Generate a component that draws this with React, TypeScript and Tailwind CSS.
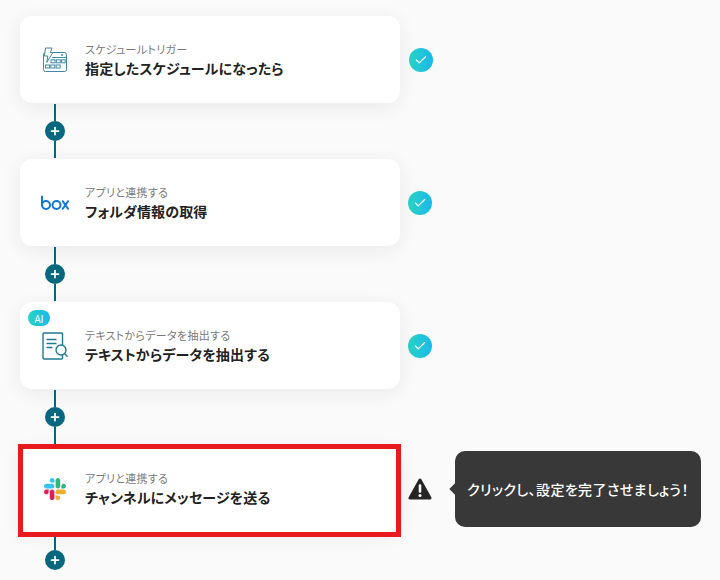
import { Plus, Check } from 'lucide-react'
import type { ReactNode } from 'react'

const jp = "font-['Noto_Sans_CJK_JP','Noto_Sans',sans-serif] [font-feature-settings:'palt']"

function ScheduleIcon() {
  return (
    <svg width="26" height="26" viewBox="0 0 26 26" fill="none" stroke="#3f8aa1" strokeWidth="1">
      <rect x="1.5" y="5.5" width="23" height="19" rx="2" />
      <path d="M10 10.5h14.5" />
      <circle cx="20" cy="8" r="0.6" fill="#3f8aa1" />
      <path d="M3.5 1h6.5L8.4 5.5h2.4L4.8 15.5l1-6.5H2.4z" fill="#fff" strokeLinejoin="round" />
      <rect x="9" y="12.8" width="4" height="3" />
      <rect x="14.3" y="12.8" width="4" height="3" />
      <rect x="19.6" y="12.8" width="3.6" height="3" />
      <rect x="3.5" y="18" width="4" height="3" />
      <rect x="8.8" y="18" width="4" height="3" />
      <rect x="14.1" y="18" width="4" height="3" />
    </svg>
  )
}

function BoxLogo() {
  return (
    <svg width="30" height="16" viewBox="0 0 30 16" fill="none" stroke="#0f74dc" strokeWidth="2" strokeLinecap="round">
      <path d="M2 1.5v8.5" />
      <circle cx="6" cy="10" r="4" />
      <circle cx="16.5" cy="10" r="4" />
      <path d="M22.8 6.2l5.2 7.6M28 6.2l-5.2 7.6" />
    </svg>
  )
}

function ExtractIcon() {
  return (
    <svg width="26" height="28" viewBox="0 0 26 28" fill="none" stroke="#1f7a94" strokeWidth="1.4">
      <rect x="1" y="1" width="19.5" height="26" rx="1" />
      <path d="M4.5 7.5h10M4.5 11.5h10M4.5 15.5h6" />
      <circle cx="19" cy="18" r="5" fill="#fff" />
      <path d="M22.8 21.8l2.7 2.9" />
    </svg>
  )
}

function SlackLogo() {
  return (
    <svg width="22" height="22" viewBox="0 0 122.8 122.8">
      <path fill="#E01E5A" d="M25.8 77.6c0 7.1-5.8 12.9-12.9 12.9S0 84.7 0 77.6s5.8-12.9 12.9-12.9h12.9v12.9z" />
      <path fill="#E01E5A" d="M32.3 77.6c0-7.1 5.8-12.9 12.9-12.9s12.9 5.8 12.9 12.9v32.3c0 7.1-5.8 12.9-12.9 12.9s-12.9-5.8-12.9-12.9V77.6z" />
      <path fill="#36C5F0" d="M45.2 25.8c-7.1 0-12.9-5.8-12.9-12.9S38.1 0 45.2 0s12.9 5.8 12.9 12.9v12.9H45.2z" />
      <path fill="#36C5F0" d="M45.2 32.3c7.1 0 12.9 5.8 12.9 12.9s-5.8 12.9-12.9 12.9H12.9C5.8 58.1 0 52.3 0 45.2s5.8-12.9 12.9-12.9h32.3z" />
      <path fill="#2EB67D" d="M97 45.2c0-7.1 5.8-12.9 12.9-12.9s12.9 5.8 12.9 12.9-5.8 12.9-12.9 12.9H97V45.2z" />
      <path fill="#2EB67D" d="M90.5 45.2c0 7.1-5.8 12.9-12.9 12.9s-12.9-5.8-12.9-12.9V12.9C64.7 5.8 70.5 0 77.6 0s12.9 5.8 12.9 12.9v32.3z" />
      <path fill="#ECB22E" d="M77.6 97c7.1 0 12.9 5.8 12.9 12.9s-5.8 12.9-12.9 12.9-12.9-5.8-12.9-12.9V97h12.9z" />
      <path fill="#ECB22E" d="M77.6 90.5c-7.1 0-12.9-5.8-12.9-12.9s5.8-12.9 12.9-12.9h32.3c7.1 0 12.9 5.8 12.9 12.9s-5.8 12.9-12.9 12.9H77.6z" />
    </svg>
  )
}

function Done({ className = '' }: { className?: string }) {
  return (
    <span className={`flex h-6 w-6 items-center justify-center rounded-full bg-gradient-to-r from-[#2bd4c4] to-[#1bb8ea] ${className}`}>
      <Check size={14} strokeWidth={2} className="text-white" />
    </span>
  )
}

function Warning() {
  return (
    <svg width="24" height="22" viewBox="0 0 24 22">
      <path fill="#262626" stroke="#262626" strokeWidth="3" strokeLinejoin="round" d="M12 2L2 20h20z" />
      <path stroke="#fff" strokeWidth="2.6" strokeLinecap="round" d="M12 7.5v6" />
      <circle cx="12" cy="17.5" r="1.5" fill="#fff" />
    </svg>
  )
}

function Card({ icon, label, title, children }: { icon: ReactNode; label: string; title: string; children?: ReactNode }) {
  return (
    <div className="relative flex h-[87px] w-[380px] shrink-0 items-center gap-[15px] rounded-xl bg-white pl-5 shadow-[0_4px_20px_rgba(0,0,0,0.07)]">
      <div className="flex w-[30px] items-center justify-center">{icon}</div>
      <div className="flex flex-col">
        <span className="text-[11px] leading-[18px] tracking-[0.3px] text-[#7a7a7a]">{label}</span>
        <span className="-mt-px text-sm leading-[22px] font-bold tracking-[0.15px] text-[#222]">{title}</span>
      </div>
      {children}
    </div>
  )
}

function Connector({ last = false }: { last?: boolean }) {
  return (
    <div className="ml-[25px] flex h-14 w-5 flex-col items-center py-px">
      <span className="w-0.5 flex-1 bg-[#06677f]" />
      <span className="flex h-5 w-5 items-center justify-center rounded-full bg-[#06677f]">
        <Plus size={12} strokeWidth={3.5} className="text-white" />
      </span>
      {last ? <span className="flex-1" /> : <span className="w-0.5 flex-1 bg-[#06677f]" />}
    </div>
  )
}

export default function App() {
  return (
    <div className={`h-[580px] overflow-hidden bg-[#fafafa] pt-4 pl-5 ${jp}`}>
      <div className="flex items-center gap-2">
        <Card icon={<ScheduleIcon />} label="スケジュールトリガー" title="指定したスケジュールになったら" />
        <Done className="ml-px" />
      </div>
      <Connector />
      <div className="flex items-center gap-2">
        <Card icon={<BoxLogo />} label="アプリと連携する" title="フォルダ情報の取得" />
        <Done />
      </div>
      <Connector />
      <div className="flex items-center gap-2">
        <Card icon={<ExtractIcon />} label="テキストからデータを抽出する" title="テキストからデータを抽出する">
          <span className="absolute top-2 left-2 flex h-4 w-[22px] items-center justify-center rounded-full bg-gradient-to-r from-[#2bd4c4] to-[#1bb8ea] text-[10px] text-white">
            AI
          </span>
        </Card>
        <Done />
      </div>
      <Connector />
      <div className="flex items-center gap-2">
        <Card icon={<SlackLogo />} label="アプリと連携する" title="チャンネルにメッセージを送る">
          <span className="absolute -top-px -right-px -bottom-[5px] -left-0.5 border-[5px] border-[#e8191f]" />
        </Card>
        <Warning />
        <div className="relative ml-[15px] flex h-[76px] w-[246px] items-center justify-center rounded-[10px] bg-[#383838] text-sm font-medium tracking-[0.4px] text-white">
          <span className="absolute top-[34px] -left-1 h-2 w-2 rotate-45 bg-[#383838]" />
          クリックし、設定を完了させましょう！
        </div>
      </div>
      <Connector last />
    </div>
  )
}
